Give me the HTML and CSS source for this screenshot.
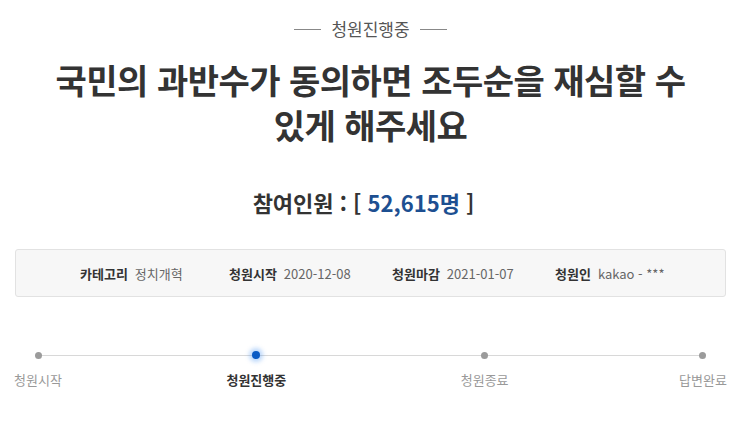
FILE: index.html
```html
<!DOCTYPE html>
<html lang="ko">
<head>
<meta charset="utf-8">
<link rel="stylesheet" href="styles.css">
</head>
<body>
<div class="page">
  <div class="status"><span class="dash"></span><span class="status-text">청원진행중</span><span class="dash"></span></div>
  <h1 class="title">국민의 과반수가 동의하면 조두순을 재심할 수<br>있게 해주세요</h1>
  <div class="count">참여인원 : [ <span class="num">52,615명</span> ]</div>
  <ul class="info">
    <li><strong>카테고리</strong><span>정치개혁</span></li>
    <li><strong>청원시작</strong><span>2020-12-08</span></li>
    <li><strong>청원마감</strong><span>2021-01-07</span></li>
    <li><strong>청원인</strong><span>kakao - ***</span></li>
  </ul>
  <div class="progress">
    <div class="track"></div>
    <div class="step"><i class="dot"></i><span>청원시작</span></div>
    <div class="step active"><i class="dot"></i><span>청원진행중</span></div>
    <div class="step third"><i class="dot"></i><span>청원종료</span></div>
    <div class="step"><i class="dot"></i><span>답변완료</span></div>
  </div>
</div>
</body>
</html>
```
FILE: styles.css
```css
html, body { margin: 0; padding: 0; background: #fff; }
body { font-family: "Noto Sans CJK KR", "Noto Sans", sans-serif; color: #333; }
.page { padding: 17px 19px 0 15px; }
.status { display: flex; justify-content: center; align-items: center; gap: 10px; color: #555; font-size: 17px; line-height: 24px; }
.dash { width: 27px; height: 1px; background: #888; }
.title { margin: 16px 0 0; text-align: center; font-size: 34px; font-weight: 700; line-height: 45px; color: #333; letter-spacing: -0.5px; }
.count { margin-top: 40px; padding-right: 14px; text-align: center; font-size: 22px; font-weight: 700; line-height: 30px; color: #333; }
.count .num { color: #1d4f91; }
.info { list-style: none; margin: 32px 0 0; padding: 0 0 0 64px; height: 46px; display: flex; align-items: center; background: #f7f7f7; border: 1px solid #e2e2e2; border-radius: 3px; font-size: 13px; }
.info li { display: flex; gap: 7px; width: 163px; }
.info li:first-child { width: 149px; }
.info strong { font-weight: 700; color: #333; }
.info span { color: #666; }
.progress { position: relative; margin-top: 49px; display: flex; justify-content: space-between; height: 50px; }
.track { position: absolute; left: 23px; right: 23px; top: 9px; height: 1px; background: #d8d8d8; }
.step { width: 46px; display: flex; flex-direction: column; align-items: center; gap: 12px; font-size: 13px; color: #999; position: relative; }
.step.third { margin-left: 10px; }
.step span { line-height: 18px; white-space: nowrap; }
.dot { display: block; width: 7px; height: 7px; border-radius: 50%; background: #9b9b9b; margin-top: 6px; }
.active .dot { width: 8px; height: 8px; background: #0a5bc4; box-shadow: 0 0 4px 3px rgba(60,140,240,0.35); margin-top: 5px; }
.active span { color: #333; font-weight: 700; }
```
